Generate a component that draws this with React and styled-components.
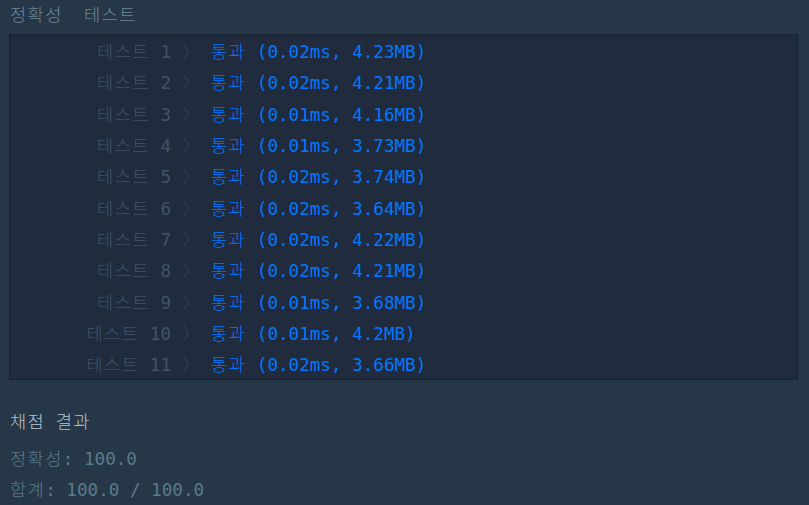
import React from "react";
import styled, { createGlobalStyle } from "styled-components";

const GlobalStyle = createGlobalStyle`
  html, body {
    margin: 0;
    background: #263747;
  }
  body {
    font-family: "DejaVu Sans Mono", "Noto Sans CJK KR", monospace;
    font-size: 17.6px;
  }
`;

// hangul falls back to Noto CJK, which is a bit narrower than a double cell
const Ko = styled.span`
  letter-spacing: 1.4px;
  font-weight: 300;
`;

const Styled = {
  Wrapper: styled.div`
    width: 809px;
    height: 505px;
    padding: 0 11px 0 9px;
    box-sizing: border-box;
    overflow: hidden;
  `,
  Tabs: styled.div`
    height: 34px;
    line-height: 30px;
    padding-left: 1px;
    color: #6d8898;
    white-space: pre;
  `,
  Console: styled.div`
    background: #202b3d;
    border: 1px solid #172130;
  `,
  Row: styled.div`
    display: grid;
    grid-template-columns: 161px 40px 1fr;
    height: 31.3px;
    align-items: center;
    white-space: pre;
  `,
  Label: styled.span`
    text-align: right;
    color: #415367;
  `,
  Chevron: styled.span`
    padding-left: 11px;
    color: #2f3d50;
  `,
  Result: styled.span`
    color: ${({ passed }) => (passed ? "#0078ff" : "#ff6b6b")};
  `,
  Summary: styled.section`
    margin-top: 27px;
    padding-left: 1px;
    & > h3 {
      margin: 0 0 7px;
      font: inherit;
      line-height: 30px;
      color: #b4c2cd;
    }
    & > p {
      margin: 0;
      line-height: 31px;
      color: #5b7a8c;
      white-space: pre;
    }
  `,
};

const results = [
  ["0.02ms", "4.23MB"],
  ["0.02ms", "4.21MB"],
  ["0.01ms", "4.16MB"],
  ["0.01ms", "3.73MB"],
  ["0.02ms", "3.74MB"],
  ["0.02ms", "3.64MB"],
  ["0.02ms", "4.22MB"],
  ["0.02ms", "4.21MB"],
  ["0.01ms", "3.68MB"],
  ["0.01ms", "4.2MB"],
  ["0.02ms", "3.66MB"],
];

const App = () => {
  return (
    <>
      <GlobalStyle />
      <Styled.Wrapper>
        <Styled.Tabs>
          <Ko>정확성</Ko>  <Ko>테스트</Ko>
        </Styled.Tabs>
        <Styled.Console>
          {results.map(([time, mem], i) => (
            <Styled.Row key={i}>
              <Styled.Label>
                <Ko>테스트</Ko> {i + 1}
              </Styled.Label>
              <Styled.Chevron>〉</Styled.Chevron>
              <Styled.Result passed>
                <Ko>통과</Ko> ({time}, {mem})
              </Styled.Result>
            </Styled.Row>
          ))}
        </Styled.Console>
        <Styled.Summary>
          <h3>
            <Ko>채점</Ko> <Ko>결과</Ko>
          </h3>
          <p>
            <Ko>정확성</Ko>: 100.0
          </p>
          <p>
            <Ko>합계</Ko>: 100.0 / 100.0
          </p>
        </Styled.Summary>
      </Styled.Wrapper>
    </>
  );
};

export default App;
